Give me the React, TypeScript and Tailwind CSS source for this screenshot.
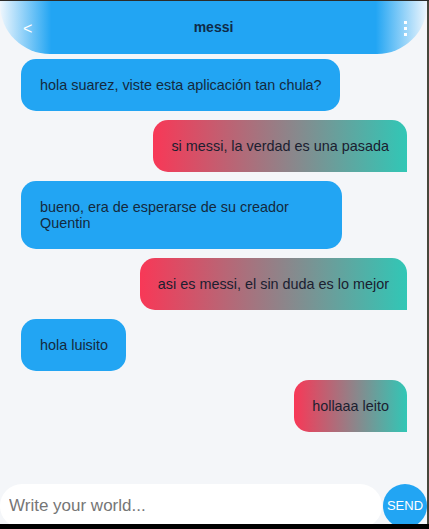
import React from "react";

type Msg = { text: string; mine: boolean };

const messages: Msg[] = [
  { text: "hola suarez, viste esta aplicación tan chula?", mine: false },
  { text: "si messi, la verdad es una pasada", mine: true },
  { text: "bueno, era de esperarse de su creador Quentin", mine: false },
  { text: "asi es messi, el sin duda es lo mejor", mine: true },
  { text: "hola luisito", mine: false },
  { text: "hollaaa leito", mine: true },
];

function Header() {
  return (
    <div className="relative flex h-[53px] shrink-0 items-center justify-center rounded-b-[50px] bg-[linear-gradient(to_right,#eef6fd_0%,#22a5f3_12%,#22a5f3_88%,#eef6fd_100%)]">
      <span className="absolute left-[23px] top-[16px] text-[16px] text-white">&lt;</span>
      <h1 className="text-[14px] font-bold text-[#0f2b48]">messi</h1>
      {/* vertical dots */}
      <div className="absolute right-[20px] top-[20px] flex flex-col gap-[3px]">
        <span className="h-[3px] w-[3px] bg-white" />
        <span className="h-[3px] w-[3px] bg-white" />
        <span className="h-[3px] w-[3px] bg-white" />
      </div>
    </div>
  );
}

function Bubble({ msg }: { msg: Msg }) {
  if (msg.mine) {
    return (
      <div className="flex justify-end">
        <div className="max-w-[321px] rounded-[15px] rounded-br-none bg-[linear-gradient(to_right,#f83857,#31c7b6)] px-[18px] py-[18px] text-[14.4px] leading-[16px] text-[#1b2030]">
          {msg.text}
        </div>
      </div>
    );
  }
  return (
    <div className="flex justify-start">
      <div className="max-w-[321px] rounded-[15px] bg-[#22a5f3] py-[18px] pl-[19px] pr-[18px] text-[14.4px] leading-[16px] text-[#14293d]">
        {msg.text}
      </div>
    </div>
  );
}

export default function App() {
  return (
    <div className="flex h-[529px] w-[429px] flex-col bg-black font-['Liberation_Sans',Arial,sans-serif]">
      <div className="flex h-[524px] border-t border-t-[#2c2c2a]">
        <div className="flex w-[427px] flex-col overflow-hidden bg-[#f4f6f9]">
          <Header />
          <div className="flex flex-1 flex-col gap-[9px] pl-[21px] pr-[20px] pt-[5px]">
            {messages.map((m, i) => (
              <Bubble key={i} msg={m} />
            ))}
          </div>
          <div className="flex h-[40px] shrink-0 items-start">
            <div className="flex h-[44px] flex-1 items-center rounded-full bg-white pl-[9px]">
              <input
                className="w-full bg-transparent text-[17px] text-[#333] outline-none placeholder:text-[#767676]"
                placeholder="Write your world..."
              />
            </div>
            <button className="ml-[1px] flex h-[44px] w-[44px] shrink-0 items-center justify-center rounded-full bg-[#22a5f3] text-[13px] text-white">
              SEND
            </button>
          </div>
        </div>
        <div className="w-[2px] bg-[#47463b]" />
      </div>
    </div>
  );
}
